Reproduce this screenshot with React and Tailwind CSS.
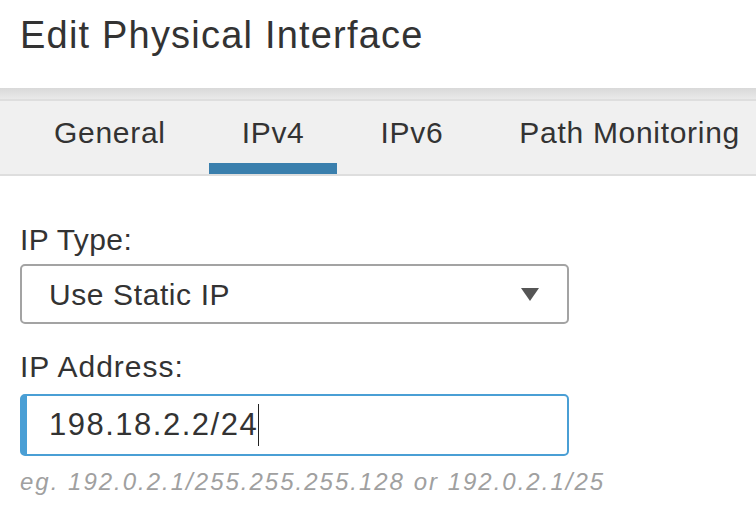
import React from 'react';

const tabs = ['General', 'IPv4', 'IPv6', 'Path Monitoring'];

const App = () => {
  const active = 'IPv4';

  return (
    <div className="w-[756px] h-[524px] overflow-hidden bg-white text-[#333] font-['Liberation_Sans',Arial,sans-serif]">
      {/* header */}
      <div className="h-[88px] pl-[20px] pt-[13px]">
        <h1 className="text-[38px] leading-[44px] tracking-[1.2px]">Edit Physical Interface</h1>
      </div>
      <div className="h-[11px] bg-gradient-to-b from-[#d9d9d9] to-[#e9e9e9]" />
      <div className="h-[2px] bg-[#dedede]" />

      {/* tabs */}
      <div className="h-[75px] bg-[#f0f0f0] border-b-2 border-[#dedede] flex items-stretch pl-[21px] gap-[10px] whitespace-nowrap">
        {tabs.map(tab => (
          <div
            key={tab}
            className={`px-[33px] flex items-center pt-[1px] text-[30px] tracking-[0.7px] border-b-[11px] ${
              tab === active ? 'border-[#3a7fad]' : 'border-transparent'
            }`}
          >
            {tab}
          </div>
        ))}
      </div>

      {/* form */}
      <div className="px-[20px] pt-[47px] w-[589px]">
        <label className="block text-[30px] leading-[34px] tracking-[0.4px]">IP Type:</label>
        <div className="mt-[7px] h-[60px] border-2 border-[#a3a3a3] rounded-[5px] flex items-center justify-between pl-[27px] pr-[28px]">
          <span className="text-[30px] tracking-[0.6px]">Use Static IP</span>
          <svg width="18" height="13" viewBox="0 0 18 13">
            <path d="M0 0H18L9 13Z" fill="#555" />
          </svg>
        </div>

        <label className="block mt-[26px] text-[30px] leading-[34px] tracking-[1px]">IP Address:</label>
        <div className="mt-[10px] h-[62px] border-2 border-l-[7px] border-[#4a9fd5] rounded-[5px] flex items-center pl-[22px]">
          <span className="text-[31px] tracking-[1.5px]">198.18.2.2/24</span>
          <span className="w-[1px] h-[42px] bg-[#222]" />
        </div>

        <p className="mt-[8px] text-[24px] italic text-[#a0a0a0] tracking-[2px] whitespace-nowrap">
          eg. 192.0.2.1/255.255.255.128 or 192.0.2.1/25
        </p>
      </div>
    </div>
  );
};

export default App;
